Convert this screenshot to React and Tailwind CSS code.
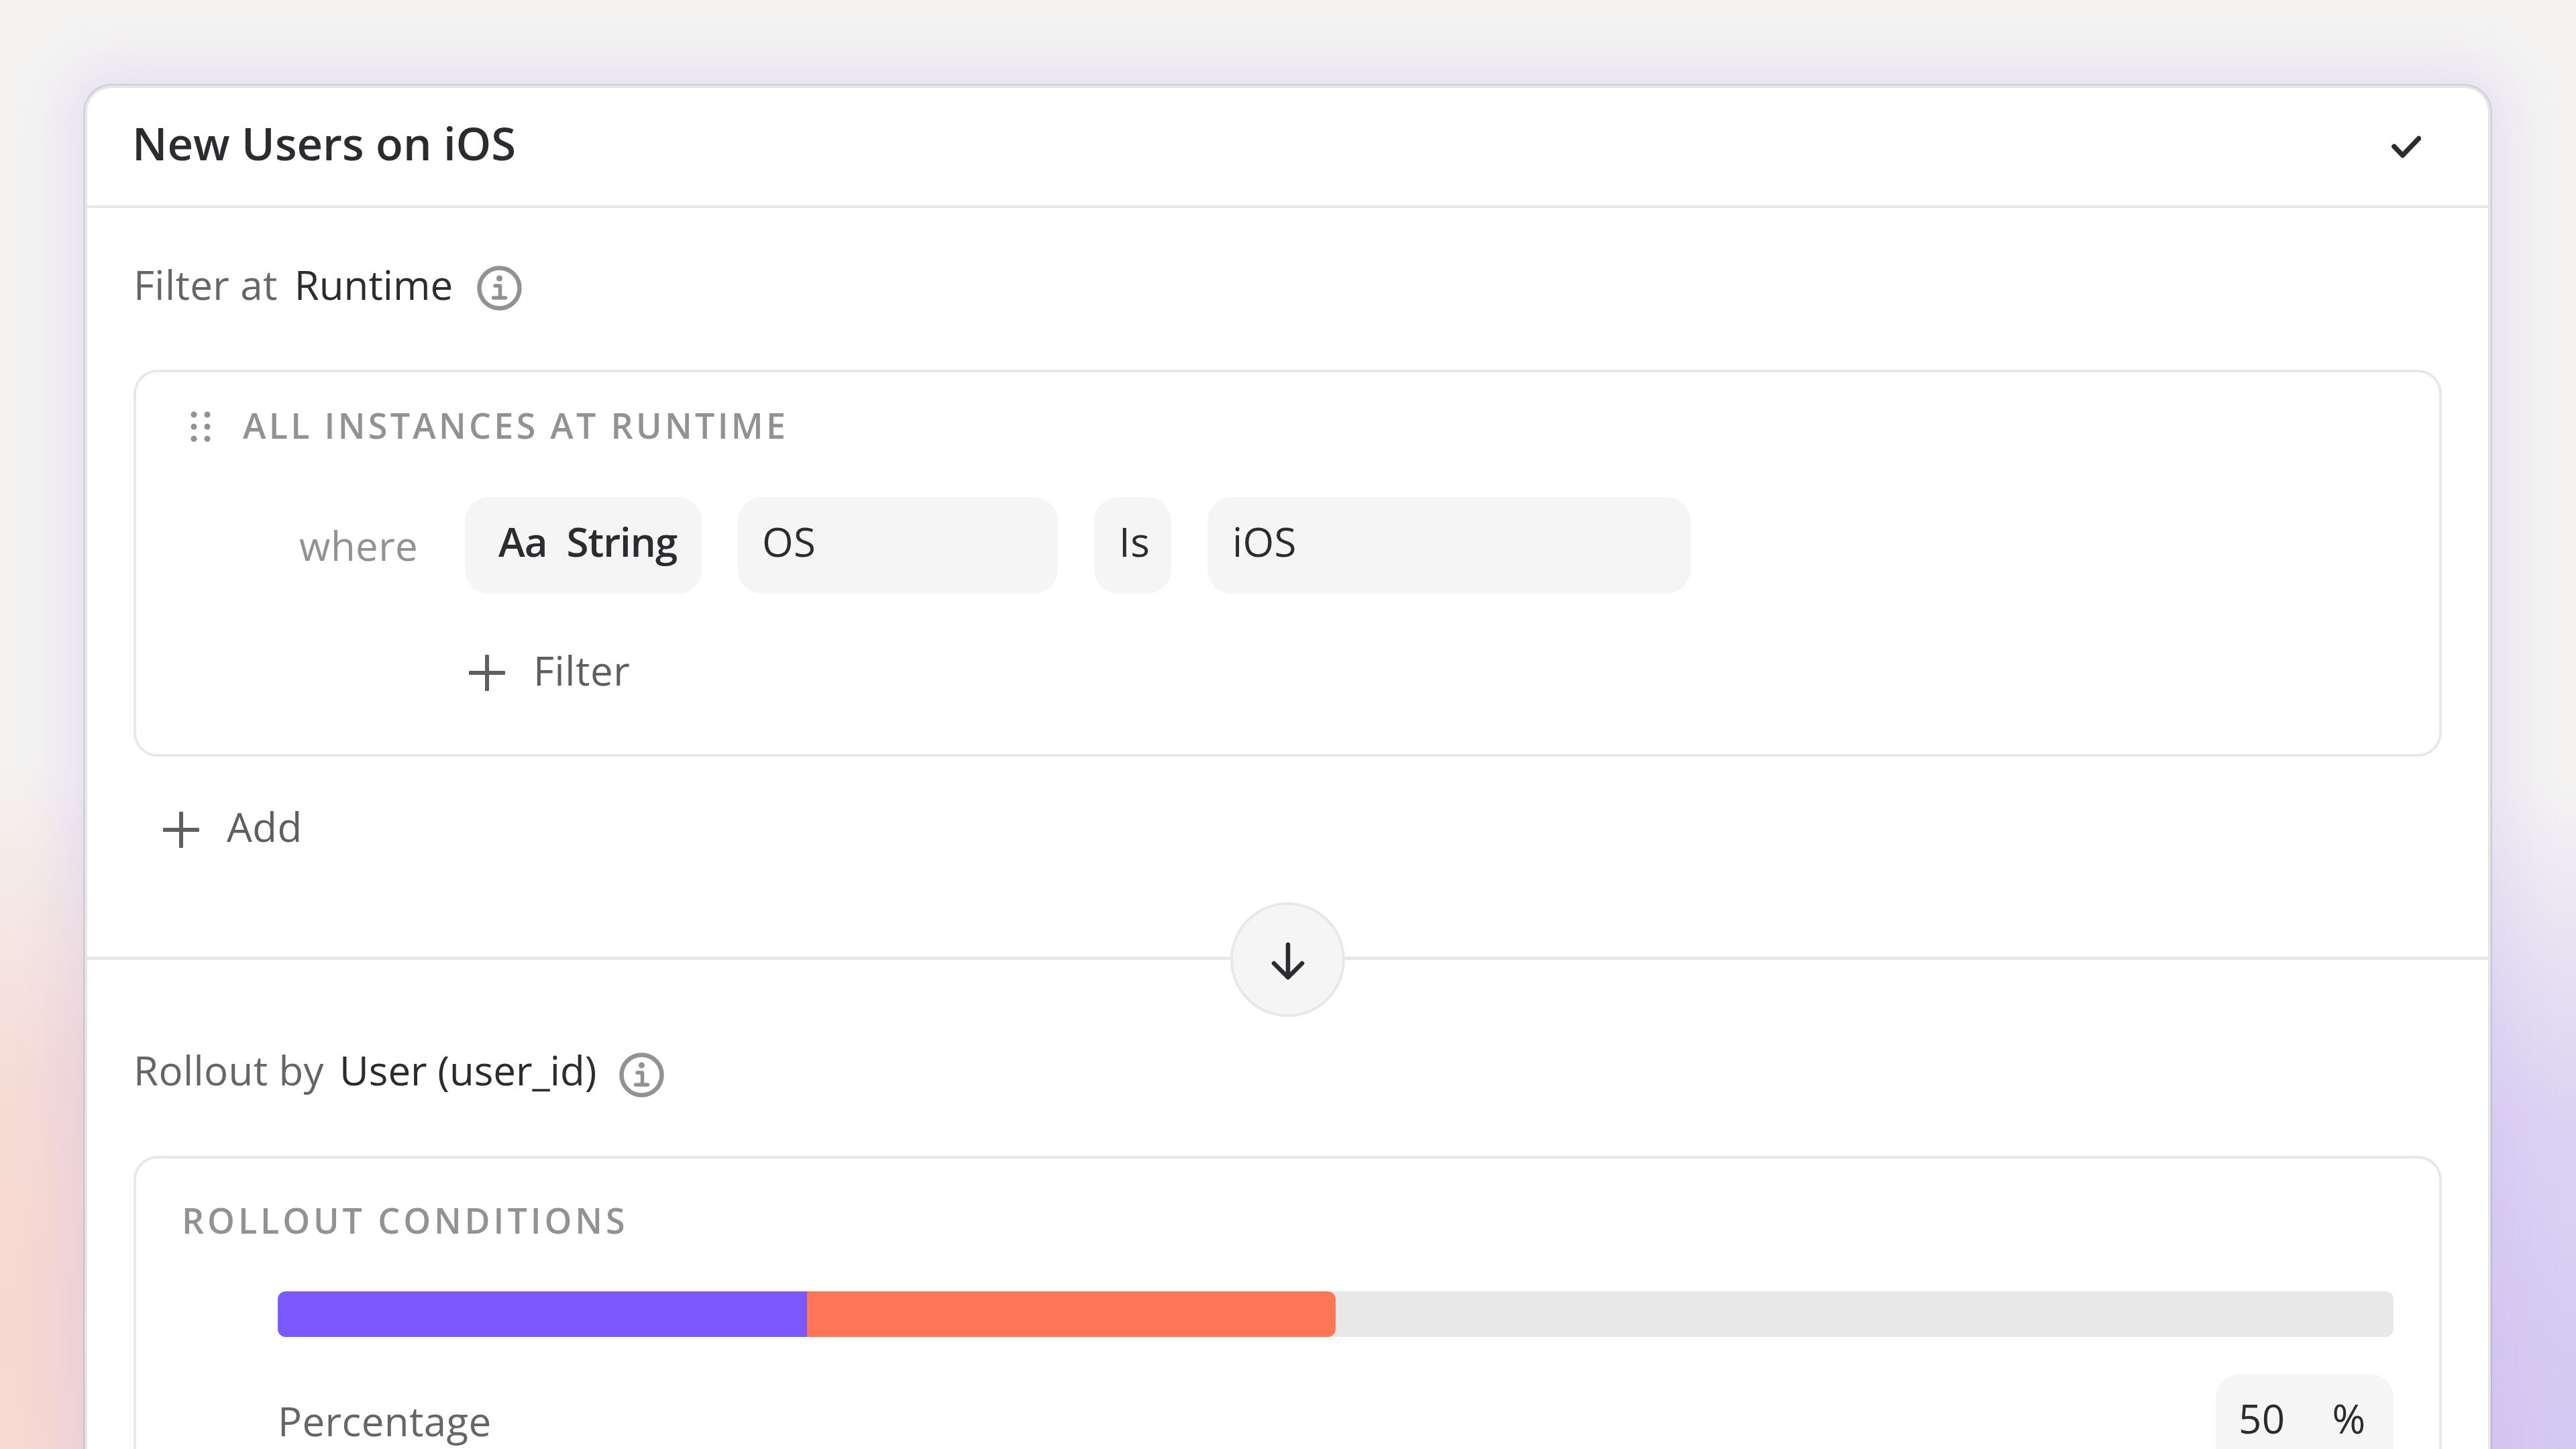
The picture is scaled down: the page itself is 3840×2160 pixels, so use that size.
const FONT = "font-['Open_Sans',sans-serif]";

function Info() {
  return (
    <svg width="67" height="67" viewBox="0 0 67 67" fill="none" className="shrink-0">
      <circle cx="33.5" cy="33.5" r="30" stroke="#929294" strokeWidth="6.5" />
      <circle cx="33.5" cy="19" r="4.5" fill="#929294" />
      <path d="M27 30h7.5v17M24.5 48h18" stroke="#929294" strokeWidth="5.5" strokeLinecap="round" strokeLinejoin="round" />
    </svg>
  );
}

function Dots() {
  return (
    <svg width="30" height="46" viewBox="0 0 30 46" fill="#929294" className="shrink-0">
      {[5, 23, 41].map((y) => (
        <g key={y}>
          <circle cx="5" cy={y} r="4.5" />
          <circle cx="25" cy={y} r="4.5" />
        </g>
      ))}
    </svg>
  );
}

function Plus() {
  return (
    <svg width="54" height="54" viewBox="0 0 54 54" fill="none" className="shrink-0">
      <path d="M27 2v50M2 27h50" stroke="#5f5f63" strokeWidth="6" strokeLinecap="round" />
    </svg>
  );
}

function Pill({ className = "", children }) {
  return (
    <div className={`h-[144px] rounded-[36px] bg-[#f5f5f5] flex items-center pb-[12px] text-[#2c2c30] ${className}`}>
      {children}
    </div>
  );
}

export default function App() {
  return (
    <div
      className={`${FONT} relative w-[3840px] h-[2160px] overflow-hidden pt-[127px] pl-[126px] pr-[127px] bg-[#f4f3f2] bg-[radial-gradient(900px_850px_at_0px_1980px,#f7d8d1_0%,#f6dcd6_45%,rgba(246,220,214,0)_100%),radial-gradient(900px_1000px_at_3840px_2160px,#d3c8f2_0%,#dcd3f3_50%,rgba(220,211,243,0)_100%)]`}
    >
      <div className="h-[2300px] rounded-[40px] border-4 border-[#e6e6e6] bg-white shadow-[0_0_2px_1px_rgba(120,115,140,0.45),0_0_70px_30px_rgba(190,170,240,0.22)] flex flex-col">
        <header className="h-[179px] shrink-0 border-b-4 border-[#e8e8e8] pl-[67px] pr-[100px] flex items-center justify-between">
          <h1 className="text-[67px] leading-none font-semibold text-[#2c2c30] mb-[10px]">New Users on iOS</h1>
          <svg width="44" height="34" viewBox="0 0 44 34" fill="none">
            <path d="M4 16.5l12.5 13L40.5 4.5" stroke="#2c2c30" strokeWidth="7.5" strokeLinecap="round" strokeLinejoin="round" />
          </svg>
        </header>

        <section className="h-[1116px] shrink-0 px-[69px] pt-[86px]">
          <div className="flex items-center h-[66px] text-[60px] font-medium tracking-[0.4px]">
            <span className="text-[#66666a] mb-[10px]">Filter at</span>
            <span className="ml-[25px] tracking-normal text-[#2c2c30] mb-[10px]">Runtime</span>
            <span className="ml-[36px]"><Info /></span>
          </div>

          <div className="mt-[89px] h-[577px] rounded-[36px] border-4 border-[#e8e8e8] pl-[81px] pt-[58px]">
            <div className="flex items-center gap-[48px] h-[46px]">
              <Dots />
              <span className="text-[52px] font-semibold tracking-[4.3px] text-[#929294] mb-[4px]">ALL INSTANCES AT RUNTIME</span>
            </div>
            <div className="mt-[82px] flex items-center text-[60px] font-medium tracking-[0.4px]">
              <span className="ml-[162px] w-[247px] text-[#929294]">where</span>
              <Pill className="w-[353px] pl-[50px] font-semibold tracking-[-1px]">
                <span>Aa</span>
                <span className="ml-[29px]">String</span>
              </Pill>
              <Pill className="ml-[54px] w-[477px] pl-[36px]">OS</Pill>
              <Pill className="ml-[54px] w-[115px] pl-[37px]">Is</Pill>
              <Pill className="ml-[54px] w-[720px] pl-[37px]">iOS</Pill>
            </div>
            <div className="mt-[73px] ml-[415px] h-[90px] flex items-center gap-[42px] text-[60px] font-medium tracking-[0.6px] text-[#5f5f63]">
              <Plus />
              <span className="mb-[8px]">Filter</span>
            </div>
          </div>

          <div className="mt-[64px] ml-[44px] h-[90px] flex items-center gap-[41px] text-[60px] font-medium tracking-[0.4px] text-[#5f5f63]">
            <Plus />
            <span className="mb-[10px]">Add</span>
          </div>
        </section>

        <div className="relative h-[5px] shrink-0 bg-[#e8e8e8]">
          <div className="absolute left-[1704px] top-[-81px] w-[171px] h-[171px] rounded-full border-4 border-[#e8e8e8] bg-[#f5f5f5] flex items-center justify-center">
            <svg width="52" height="56" viewBox="0 0 52 56" fill="none" className="mt-[4px]">
              <path d="M26 3v48M5 31l21 21 21-21" stroke="#2c2c30" strokeWidth="6.5" strokeLinecap="round" strokeLinejoin="round" />
            </svg>
          </div>
        </div>

        <section className="px-[69px] pt-[138px]">
          <div className="flex items-center h-[66px] text-[60px] font-medium tracking-[0.4px]">
            <span className="text-[#66666a] mb-[14px]">Rollout by</span>
            <span className="ml-[23px] tracking-normal text-[#2c2c30] mb-[14px]">User (user_id)</span>
            <span className="ml-[34px]"><Info /></span>
          </div>

          <div className="mt-[88px] rounded-[36px] border-4 border-[#e8e8e8] pl-[68px] pr-[68px] pt-[70px] pb-[60px]">
            <div className="h-[44px] flex items-center text-[52px] font-semibold tracking-[4.9px] text-[#929294]">ROLLOUT CONDITIONS</div>
            <div className="mt-[84px] ml-[143px] h-[68px] rounded-[12px] bg-[#e8e8e8] flex overflow-hidden">
              <div className="w-1/4 bg-[#7a5aff]" />
              <div className="w-1/4 rounded-r-[12px] bg-[#ff7556]" />
            </div>
            <div className="mt-[55px] ml-[143px] flex items-center justify-between text-[60px] font-medium tracking-[0.4px]">
              <span className="text-[#66666a] mb-[4px]">Percentage</span>
              <Pill className="w-[265px] pl-[34px]">
                <span>50</span>
                <span className="ml-[70px]">%</span>
              </Pill>
            </div>
          </div>
        </section>
      </div>
    </div>
  );
}
